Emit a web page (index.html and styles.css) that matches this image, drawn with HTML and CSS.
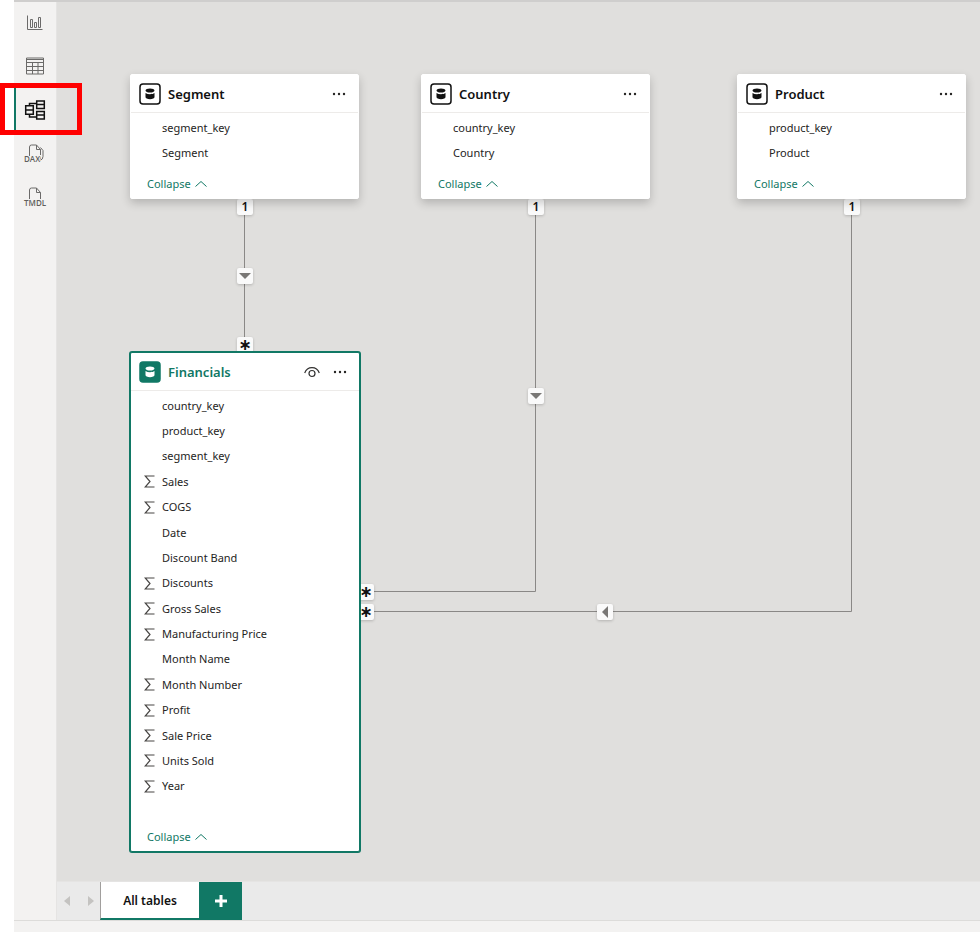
FILE: index.html
```html
<!DOCTYPE html>
<html lang="en">
<head>
<meta charset="utf-8">
<title>Model view</title>
<link rel="stylesheet" href="styles.css">
</head>
<body>
<svg class="defs" width="0" height="0" aria-hidden="true">
  <symbol id="i-table" viewBox="0 0 22 22">
    <rect class="frame" x="1" y="1" width="20" height="20" rx="3"/>
    <path class="drum" d="M6.500 7.500C6.500 6.200 8.500 5.400 11 5.400s4.500.8 4.500 2.100-2 2.100-4.500 2.100S6.500 8.800 6.500 7.500zM6.500 10c1.200.8 2.700 1.200 4.500 1.200s3.300-.4 4.500-1.200v4c0 1.400-2 2.200-4.500 2.200s-4.500-.8-4.500-2.200z"/>
  </symbol>
  <symbol id="i-more" viewBox="0 0 14 4"><circle cx="2" cy="2" r="1.200"/><circle cx="7" cy="2" r="1.200"/><circle cx="12" cy="2" r="1.200"/></symbol>
  <symbol id="i-up" viewBox="0 0 14 8"><path d="M1.500 6.500L7 1.500l5.500 5"/></symbol>
  <symbol id="i-sum" viewBox="0 0 11 13"><path d="M10.500 1H1.200L6 6.500 1.200 12h9.300"/></symbol>
</svg>

<div class="workspace">
  <nav class="rail" aria-label="Views">
    <button class="view" aria-label="Report view">
      <svg width="16" height="16" viewBox="0 0 16 16"><path d="M.5.500v14h15M3.500 4.500h2v8h-2zM7.500 7.500h2v5h-2zM11.500 2.500h2v10h-2z" /></svg>
    </button>
    <button class="view" aria-label="Table view">
      <svg width="18" height="18" viewBox="0 0 18 18"><path d="M.5 1h17v16H.5zM.5 2.500h17M.5 5.500h17M.5 9.500h17M.5 13.500h17M6.500 5v12M12 5v12"/></svg>
    </button>
    <button class="view current" aria-label="Model view">
      <svg width="22" height="20" viewBox="0 0 22 20"><path d="M1.700 5.700h7.600v8.600H1.700zM1.700 10h7.600M12.700 1h7.600v7.500h-7.600zM12.700 4.500h7.600M12.700 11.500h7.600v7.500h-7.600zM12.700 15h7.600M5.500 5.500V3.500h7M5.500 14.500v2.500h7"/></svg>
      <span class="highlight"></span>
    </button>
    <button class="view" aria-label="DAX query view">
      <svg width="22" height="20" viewBox="0 0 22 20"><path d="M5.500 12V3q0-2 2-2h5l4 4.500v8q0 1.500-1.500 2M12.500 1v4.500h4M16.500 3.500l2.500 3v6q0 3-3 4"/><text x="0" y="18">DAX</text></svg>
    </button>
    <button class="view" aria-label="TMDL view">
      <svg width="22" height="20" viewBox="0 0 22 20"><path d="M5.500 12V3q0-2 2-2h5l4 4.500V12M12.500 1v4.500h4"/><text x="0" y="19">TMDL</text></svg>
    </button>
  </nav>

  <main class="main">
    <section class="canvas" aria-label="Model diagram">
      <svg class="links" width="924" height="881" viewBox="0 0 924 881" aria-hidden="true">
        <path d="M187.500 200V350M478.500 200V591.500H310M794.500 200V611.500H310"/>
      </svg>
      <span class="mark one-segment">1</span>
      <span class="mark one-country">1</span>
      <span class="mark one-product">1</span>
      <span class="mark many many-segment">∗</span>
      <span class="mark many many-country">∗</span>
      <span class="mark many many-product">∗</span>
      <span class="mark dir-segment"><svg width="12" height="6" viewBox="0 0 12 6"><path d="M0 0h12L6 6z"/></svg></span>
      <span class="mark dir-country"><svg width="12" height="6" viewBox="0 0 12 6"><path d="M0 0h12L6 6z"/></svg></span>
      <span class="mark dir-product"><svg width="6" height="12" viewBox="0 0 6 12"><path d="M6 0v12L0 6z"/></svg></span>

      <article class="card segment">
        <header class="head"><svg class="badge"><use href="#i-table"/></svg><h2>Segment</h2><button class="icon" aria-label="More options"><svg class="more"><use href="#i-more"/></svg></button></header>
        <ul class="fields"><li>segment_key</li><li>Segment</li></ul>
        <button class="collapse">Collapse<svg class="up"><use href="#i-up"/></svg></button>
      </article>

      <article class="card country">
        <header class="head"><svg class="badge"><use href="#i-table"/></svg><h2>Country</h2><button class="icon" aria-label="More options"><svg class="more"><use href="#i-more"/></svg></button></header>
        <ul class="fields"><li>country_key</li><li>Country</li></ul>
        <button class="collapse">Collapse<svg class="up"><use href="#i-up"/></svg></button>
      </article>

      <article class="card product">
        <header class="head"><svg class="badge"><use href="#i-table"/></svg><h2>Product</h2><button class="icon" aria-label="More options"><svg class="more"><use href="#i-more"/></svg></button></header>
        <ul class="fields"><li>product_key</li><li>Product</li></ul>
        <button class="collapse">Collapse<svg class="up"><use href="#i-up"/></svg></button>
      </article>

      <article class="card financials selected">
        <header class="head"><svg class="badge"><use href="#i-table"/></svg><h2>Financials</h2>
          <button class="icon" aria-label="Visibility"><svg class="eye" viewBox="0 0 16 12"><path d="M.7 7C2 3.500 4.700 1.700 8 1.700S14 3.500 15.300 7"/><circle cx="8" cy="7.500" r="3"/></svg></button>
          <button class="icon" aria-label="More options"><svg class="more"><use href="#i-more"/></svg></button></header>
        <ul class="fields">
          <li>country_key</li>
          <li>product_key</li>
          <li>segment_key</li>
          <li><svg class="sum"><use href="#i-sum"/></svg>Sales</li>
          <li><svg class="sum"><use href="#i-sum"/></svg>COGS</li>
          <li>Date</li>
          <li>Discount Band</li>
          <li><svg class="sum"><use href="#i-sum"/></svg>Discounts</li>
          <li><svg class="sum"><use href="#i-sum"/></svg>Gross Sales</li>
          <li><svg class="sum"><use href="#i-sum"/></svg>Manufacturing Price</li>
          <li>Month Name</li>
          <li><svg class="sum"><use href="#i-sum"/></svg>Month Number</li>
          <li><svg class="sum"><use href="#i-sum"/></svg>Profit</li>
          <li><svg class="sum"><use href="#i-sum"/></svg>Sale Price</li>
          <li><svg class="sum"><use href="#i-sum"/></svg>Units Sold</li>
          <li><svg class="sum"><use href="#i-sum"/></svg>Year</li>
        </ul>
        <button class="collapse">Collapse<svg class="up"><use href="#i-up"/></svg></button>
      </article>
    </section>

    <div class="tabs">
      <div class="steps">
        <button aria-label="Previous page"><svg width="6" height="10" viewBox="0 0 6 10"><path d="M6 0v10L0 5z"/></svg></button>
        <button aria-label="Next page"><svg width="6" height="10" viewBox="0 0 6 10"><path d="M0 0v10l6-5z"/></svg></button>
      </div>
      <button class="tab">All tables</button>
      <button class="add" aria-label="New layout"><svg width="12" height="12" viewBox="0 0 12 12"><path d="M6 0v12M0 6h12"/></svg></button>
    </div>
  </main>
</div>
<footer class="status"></footer>
</body>
</html>
```
FILE: styles.css
```css
* { box-sizing: border-box; }

body {
  margin: 0;
  padding-left: 14px;
  min-height: 100vh;
  display: flex;
  flex-direction: column;
  background: #fff;
  color: #252423;
  font: 11px/16px "Noto Sans", "Open Sans", sans-serif;
}

button {
  margin: 0;
  padding: 0;
  border: 0;
  background: none;
  color: inherit;
  font: inherit;
  display: flex;
  align-items: center;
  justify-content: center;
}

.defs { position: absolute; }

.workspace {
  flex: 1;
  display: flex;
  border-top: 2px solid #cfcecd;
}

/* View switcher */
.rail {
  width: 43px;
  flex: none;
  display: flex;
  flex-direction: column;
  background: #f3f2f1;
  border-right: 1px solid #e5e4e3;
}

.view {
  height: 43px;
  padding: 0 0 2px;
  position: relative;
}

.view svg {
  overflow: visible;
  fill: none;
  stroke: #6b6a69;
}

.view text {
  fill: #605e5c;
  stroke: #f3f2f1;
  stroke-width: 2px;
  paint-order: stroke;
  font: 600 8px "Open Sans", sans-serif;
}

.view.current { height: 45px; }

.view.current svg {
  stroke: #111;
  stroke-width: 1.5px;
}

.view.current::before {
  content: "";
  position: absolute;
  left: 0;
  top: 0;
  bottom: 0;
  width: 2px;
  background: #117865;
}

.highlight {
  position: absolute;
  z-index: 5;
  left: -14px;
  top: -5px;
  width: 82px;
  height: 52px;
  border: 5px solid #f00;
}

.main {
  flex: 1;
  min-width: 0;
  display: flex;
  flex-direction: column;
}

/* Diagram canvas */
.canvas {
  flex: 1;
  min-height: 860px;
  position: relative;
  overflow: hidden;
  background: #e0dfdd;
}

.links {
  position: absolute;
  left: 0;
  top: -2px;
  fill: none;
  stroke: #8a8886;
}

.mark {
  position: absolute;
  width: 16px;
  height: 16px;
  display: flex;
  align-items: center;
  justify-content: center;
  border-radius: 2px;
  background: #fafafa;
  box-shadow: 0 1px 3px rgba(0, 0, 0, .2);
  color: #111;
  font-size: 12px;
  font-weight: 600;
}

.mark svg { fill: #797775; }

.one-segment { left: 180px; top: 197px; }
.one-country { left: 471px; top: 197px; }
.one-product { left: 787px; top: 197px; }
.many-segment { left: 180px; top: 335px; }
.many-country { left: 301px; top: 582px; }
.many-product { left: 301px; top: 602px; }
.many { font: 700 16px/16px "DejaVu Sans", sans-serif; }
.dir-segment { left: 180px; top: 266px; }
.dir-country { left: 471px; top: 386px; }
.dir-product { left: 540px; top: 602px; }

.card {
  position: absolute;
  width: 229px;
  display: flex;
  flex-direction: column;
  border: 1px solid #fff;
  border-radius: 2px;
  background: #fff;
  box-shadow: 0 4px 10px rgba(0, 0, 0, .2);
}

.segment { left: 73px; top: 72px; }
.country { left: 364px; top: 72px; }
.product { left: 680px; top: 72px; }
.financials { left: 73px; top: 350px; width: 230px; }

.selected {
  border-color: #117865;
  box-shadow: 0 0 0 1px #117865;
}

.head {
  height: 38px;
  padding: 0 9px 0 8px;
  display: flex;
  align-items: center;
  border-bottom: 1px solid #edebe9;
}

.head h2 {
  flex: 1;
  margin: 0 0 0 7px;
  color: #111;
  font-size: 13px;
  font-weight: 600;
}

.selected h2 { color: #117865; }

.badge { --frame: #fff; --line: #111; --drum: #111; width: 22px; height: 22px; }
.selected .badge { --frame: #117865; --line: #117865; --drum: #fff; }
.frame { fill: var(--frame); stroke: var(--line); stroke-width: 1.5px; }
.drum { fill: var(--drum); }

.icon { width: 20px; height: 24px; }
.icon + .icon { margin-left: 8px; }
.more { width: 14px; height: 4px; fill: #252423; }
.eye { width: 16px; height: 12px; fill: none; stroke: #323130; stroke-width: 1.2px; }

.fields {
  margin: 0;
  padding: 2px 0 0;
  list-style: none;
  display: grid;
  grid-auto-rows: 25px;
}

.financials .fields {
  height: 408px;
  grid-auto-rows: 1fr;
}

.fields li {
  padding-left: 31px;
  display: flex;
  align-items: center;
}

.sum {
  width: 11px;
  height: 13px;
  margin: 0 7px 0 -18px;
  fill: none;
  stroke: #484644;
  stroke-width: 1.2px;
}

.collapse {
  margin-top: 5px;
  padding-left: 16px;
  height: 28px;
  justify-content: flex-start;
  gap: 3px;
  color: #117865;
}

.financials .collapse { margin-top: 23px; height: 29px; }

.up { width: 14px; height: 8px; fill: none; stroke: #117865; }

/* Layout tabs */
.tabs {
  height: 39px;
  display: flex;
  background: #eaeaea;
  border-top: 1px solid #e5e4e3;
}

.steps {
  width: 43px;
  padding: 0 6px 0 7px;
  display: flex;
  justify-content: space-between;
}

.steps svg { fill: #c4c3c1; }

.tab {
  width: 99px;
  padding-top: 2px;
  border-left: 1px solid #a19f9d;
  border-bottom: 2px solid #117865;
  background: #fff;
  color: #111;
  font-size: 12px;
  font-weight: 600;
}

.add { width: 43px; background: #117865; }
.add svg { stroke: #fff; stroke-width: 3px; }

.status {
  height: 12px;
  border-top: 1px solid #dddcda;
  background: #f3f2f1;
}
```
